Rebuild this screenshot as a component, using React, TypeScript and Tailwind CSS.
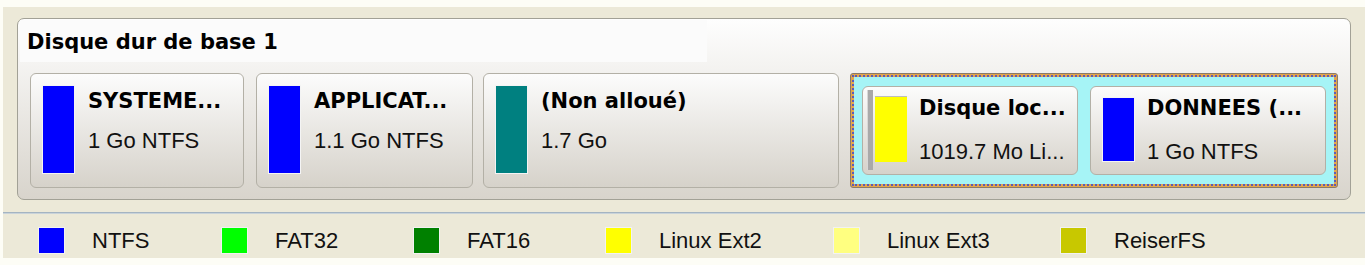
import React from "react";

const bold =
  "font-['DejaVu_Sans',sans-serif] font-bold text-[21px] leading-[21px] text-black whitespace-nowrap";
const reg =
  "font-['Liberation_Sans',Arial,sans-serif] text-[22px] leading-[22px] text-[#111] whitespace-nowrap";

function Card({
  className,
  bar,
  name,
  size,
}: {
  className: string;
  bar: string;
  name: string;
  size: string;
}) {
  return (
    <div
      className={
        "flex h-[115px] shrink-0 rounded-[6px] border border-[#b3b0a6] bg-gradient-to-b from-[#fcfcfc] to-[#d6d2ca] pl-[11px] pt-[11px] " +
        className
      }
    >
      <div className={"h-[89px] w-[33px] border border-[#f4f4f4] " + bar} />
      <div className="ml-[13px] mt-[6px] flex flex-col">
        <div className={bold}>{name}</div>
        <div className={reg + " mt-[18px]"}>{size}</div>
      </div>
    </div>
  );
}

const legend = [
  { label: "NTFS", color: "bg-[#0000ff]", w: "w-[183px]" },
  { label: "FAT32", color: "bg-[#00ff00]", w: "w-[192px]" },
  { label: "FAT16", color: "bg-[#008000]", w: "w-[192px]" },
  { label: "Linux Ext2", color: "bg-[#ffff00]", w: "w-[228px]" },
  { label: "Linux Ext3", color: "bg-[#ffff80]", w: "w-[227px]" },
  { label: "ReiserFS", color: "bg-[#c8c800]", w: "w-[200px]" },
];

export default function App() {
  return (
    <div className="h-[265px] w-[1365px] overflow-hidden bg-[#fdfdf6] pl-[3px] pt-[7px]">
      <div className="bg-[#ece9d8] px-[14px] pt-[11px]">
        {/* Disk panel */}
        <div className="flex h-[182px] w-[1334px] flex-col rounded-[7px] border border-[#a2a196] bg-gradient-to-b from-[#fefefe] to-[#d8d4cc]">
          <div className="ml-[2px] mt-[1px] h-[42px] w-[687px] bg-[#fbfbfb] pl-[7px] pt-[12px]">
            <div className={bold}>Disque dur de base 1</div>
          </div>
          <div className="mt-[11px] flex pl-[12px]">
            <Card className="w-[214px]" bar="bg-[#0000ff]" name="SYSTEME..." size="1 Go NTFS" />
            <Card className="ml-[12px] w-[217px]" bar="bg-[#0000ff]" name="APPLICAT..." size="1.1 Go NTFS" />
            <Card className="ml-[10px] w-[356px]" bar="bg-[#008080]" name="(Non alloué)" size="1.7 Go" />
            {/* Extended partition */}
            <div className="ml-[11px] h-[115px] w-[488px] shrink-0 rounded-[3px] border border-[#8a7a6a] bg-[#e3a64c] p-px">
              <div className="h-full w-full border-2 border-dotted border-[#5f5cb4] bg-[#e3a64c]">
                <div className="flex h-full w-full bg-[#a6f4f6] pl-[8px] pt-[9px]">
                  {/* Disque local */}
                  <div className="flex h-[89px] w-[216px] shrink-0 rounded-[6px] border border-[#b3b0a6] bg-gradient-to-b from-[#fcfcfc] to-[#d6d2ca] pl-[4px]">
                    <div className="mt-[3px] h-[80px] w-[6px] border-l border-[#d8d8d8] bg-[#a9a9a9]" />
                    <div className="ml-[2px] mt-[9px] h-[66px] w-[32px] border-t border-[#bdbdbd] bg-[#ffff00]" />
                    <div className="ml-[12px] mt-[11px] flex flex-col">
                      <div className={bold}>Disque loc...</div>
                      <div className={reg + " mt-[22px]"}>1019.7 Mo Li...</div>
                    </div>
                  </div>
                  {/* DONNEES */}
                  <div className="ml-[12px] flex h-[89px] w-[236px] shrink-0 rounded-[6px] border border-[#b3b0a6] bg-gradient-to-b from-[#fcfcfc] to-[#d6d2ca] pl-[11px]">
                    <div className="mt-[10px] h-[65px] w-[33px] border border-[#f4f4f4] bg-[#0000ff]" />
                    <div className="ml-[12px] mt-[11px] flex flex-col">
                      <div className={bold}>DONNEES (...</div>
                      <div className={reg + " mt-[22px]"}>1 Go NTFS</div>
                    </div>
                  </div>
                </div>
              </div>
            </div>
          </div>
        </div>
        <div className="h-[12px]" />
      </div>
      {/* separator */}
      <div className="h-[1px] bg-[#a4b4c2]" />
      <div className="h-[1px] bg-[#c9d3da]" />
      {/* legend */}
      <div className="flex h-[44px] items-start bg-[#ece9d8] pl-[35px] pt-[13px]">
        {legend.map((l) => (
          <div key={l.label} className={"flex shrink-0 items-center " + l.w}>
            <div className={"h-[27px] w-[27px] border border-[#f2f2f2] " + l.color} />
            <div className={reg + " ml-[27px]"}>{l.label}</div>
          </div>
        ))}
      </div>
    </div>
  );
}
